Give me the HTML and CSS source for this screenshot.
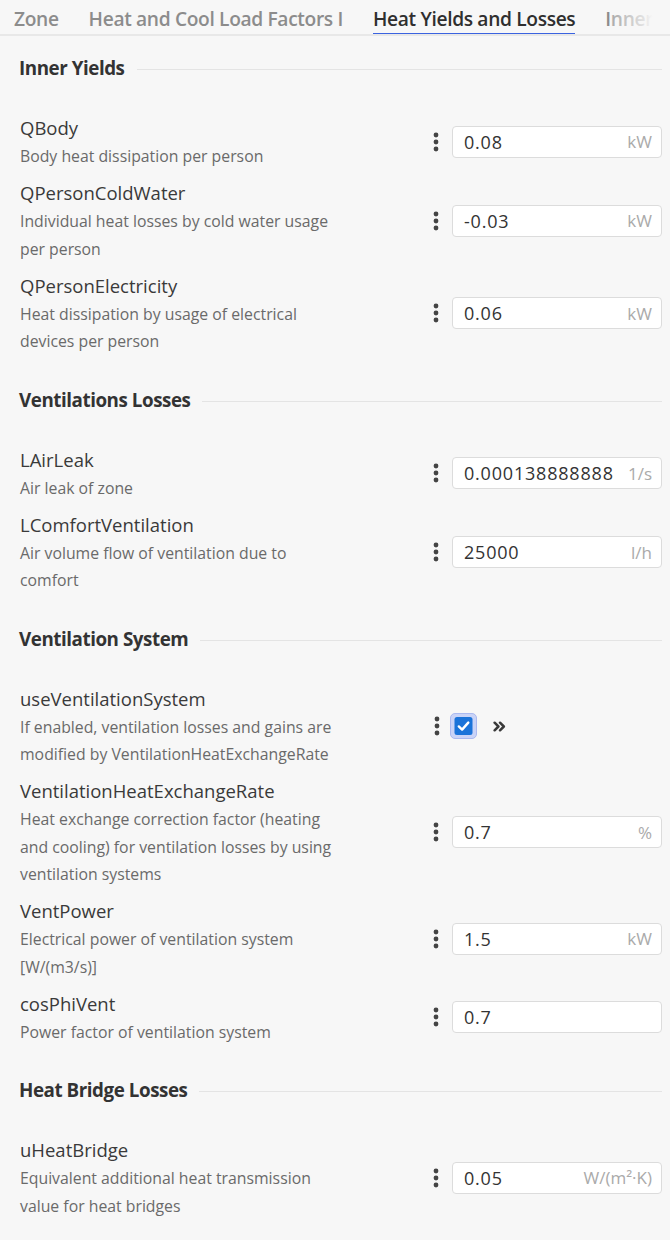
FILE: index.html
```html
<!DOCTYPE html>
<html>
<head>
<meta charset="utf-8">
<link rel="stylesheet" href="styles.css">
</head>
<body>
<div class="tabs">
  <div class="tab">Zone</div>
  <div class="tab">Heat and Cool Load Factors I</div>
  <div class="tab active">Heat Yields and Losses</div>
  <div class="tab">Inner Yields</div>
  <div class="fade"></div>
</div>

<div class="section">
  <div class="sec-head"><span>Inner Yields</span><div class="rule"></div></div>
  <div class="rows">
    <div class="row">
      <div class="info"><div class="label">QBody</div><div class="desc">Body heat dissipation per person</div></div>
      <div class="ctrl"><svg class="dots" viewBox="0 0 6 20"><circle cx="3" cy="3" r="2.4"/><circle cx="3" cy="10" r="2.4"/><circle cx="3" cy="17" r="2.4"/></svg><div class="field"><span class="val">0.08</span><span class="unit">kW</span></div></div>
    </div>
    <div class="row">
      <div class="info"><div class="label">QPersonColdWater</div><div class="desc">Individual heat losses by cold water usage per person</div></div>
      <div class="ctrl"><svg class="dots" viewBox="0 0 6 20"><circle cx="3" cy="3" r="2.4"/><circle cx="3" cy="10" r="2.4"/><circle cx="3" cy="17" r="2.4"/></svg><div class="field"><span class="val">-0.03</span><span class="unit">kW</span></div></div>
    </div>
    <div class="row">
      <div class="info"><div class="label">QPersonElectricity</div><div class="desc">Heat dissipation by usage of electrical devices per person</div></div>
      <div class="ctrl"><svg class="dots" viewBox="0 0 6 20"><circle cx="3" cy="3" r="2.4"/><circle cx="3" cy="10" r="2.4"/><circle cx="3" cy="17" r="2.4"/></svg><div class="field"><span class="val">0.06</span><span class="unit">kW</span></div></div>
    </div>
  </div>
</div>

<div class="section">
  <div class="sec-head"><span>Ventilations Losses</span><div class="rule"></div></div>
  <div class="rows">
    <div class="row">
      <div class="info"><div class="label">LAirLeak</div><div class="desc">Air leak of zone</div></div>
      <div class="ctrl"><svg class="dots" viewBox="0 0 6 20"><circle cx="3" cy="3" r="2.4"/><circle cx="3" cy="10" r="2.4"/><circle cx="3" cy="17" r="2.4"/></svg><div class="field"><span class="val">0.000138888888</span><span class="unit">1/s</span></div></div>
    </div>
    <div class="row">
      <div class="info"><div class="label">LComfortVentilation</div><div class="desc">Air volume flow of ventilation due to comfort</div></div>
      <div class="ctrl"><svg class="dots" viewBox="0 0 6 20"><circle cx="3" cy="3" r="2.4"/><circle cx="3" cy="10" r="2.4"/><circle cx="3" cy="17" r="2.4"/></svg><div class="field"><span class="val">25000</span><span class="unit">l/h</span></div></div>
    </div>
  </div>
</div>

<div class="section">
  <div class="sec-head"><span>Ventilation System</span><div class="rule"></div></div>
  <div class="rows">
    <div class="row">
      <div class="info"><div class="label">useVentilationSystem</div><div class="desc">If enabled, ventilation losses and gains are modified by VentilationHeatExchangeRate</div></div>
      <div class="ctrl"><svg class="dots" viewBox="0 0 6 20"><circle cx="3" cy="3" r="2.4"/><circle cx="3" cy="10" r="2.4"/><circle cx="3" cy="17" r="2.4"/></svg>
        <div class="check"><svg viewBox="0 0 18 18"><rect x="0" y="0" width="18" height="18" rx="2.5" fill="#1a73d9"/><path d="M4.3 9.4 L7.6 12.6 L13.8 5.6" fill="none" stroke="#fff" stroke-width="2.4" stroke-linecap="round" stroke-linejoin="round"/></svg></div>
        <svg class="chev" viewBox="0 0 12 10"><path d="M1.5 1.5 L5 5 L1.5 8.5 M6.5 1.5 L10 5 L6.5 8.5" fill="none" stroke="#3a3a3a" stroke-width="2.3" stroke-linecap="round" stroke-linejoin="round"/></svg>
      </div>
    </div>
    <div class="row">
      <div class="info"><div class="label">VentilationHeatExchangeRate</div><div class="desc">Heat exchange correction factor (heating and cooling) for ventilation losses by using ventilation systems</div></div>
      <div class="ctrl"><svg class="dots" viewBox="0 0 6 20"><circle cx="3" cy="3" r="2.4"/><circle cx="3" cy="10" r="2.4"/><circle cx="3" cy="17" r="2.4"/></svg><div class="field"><span class="val">0.7</span><span class="unit">%</span></div></div>
    </div>
    <div class="row">
      <div class="info"><div class="label">VentPower</div><div class="desc">Electrical power of ventilation system [W/(m3/s)]</div></div>
      <div class="ctrl"><svg class="dots" viewBox="0 0 6 20"><circle cx="3" cy="3" r="2.4"/><circle cx="3" cy="10" r="2.4"/><circle cx="3" cy="17" r="2.4"/></svg><div class="field"><span class="val">1.5</span><span class="unit">kW</span></div></div>
    </div>
    <div class="row">
      <div class="info"><div class="label">cosPhiVent</div><div class="desc">Power factor of ventilation system</div></div>
      <div class="ctrl"><svg class="dots" viewBox="0 0 6 20"><circle cx="3" cy="3" r="2.4"/><circle cx="3" cy="10" r="2.4"/><circle cx="3" cy="17" r="2.4"/></svg><div class="field"><span class="val">0.7</span><span class="unit"></span></div></div>
    </div>
  </div>
</div>

<div class="section">
  <div class="sec-head"><span>Heat Bridge Losses</span><div class="rule"></div></div>
  <div class="rows">
    <div class="row">
      <div class="info"><div class="label">uHeatBridge</div><div class="desc">Equivalent additional heat transmission value for heat bridges</div></div>
      <div class="ctrl"><svg class="dots" viewBox="0 0 6 20"><circle cx="3" cy="3" r="2.4"/><circle cx="3" cy="10" r="2.4"/><circle cx="3" cy="17" r="2.4"/></svg><div class="field"><span class="val">0.05</span><span class="unit">W/(m²·K)</span></div></div>
    </div>
  </div>
</div>
</body>
</html>
```

FILE: styles.css
```css
* { box-sizing: border-box; }
html, body {
  margin: 0;
  padding: 0;
  background: #f7f7f7;
  font-family: "Open Sans", "Noto Sans", sans-serif;
  color: #333;
}
.tabs {
  position: relative;
  display: flex;
  height: 36px;
  padding-left: 14px;
  gap: 30px;
  border-bottom: 2px solid #e8e8e8;
  overflow: hidden;
  white-space: nowrap;
}
.tab {
  font-size: 19.2px;
  font-weight: 600;
  color: #8c8c8c;
  line-height: 37px;
  height: 36px;
  flex: none;
  letter-spacing: -0.35px;
}
.tab.active {
  color: #2f2f2f;
  border-bottom: 3px solid #3b63e0;
}
.fade {
  position: absolute;
  top: 0;
  left: 612px;
  width: 58px;
  height: 34px;
  background: linear-gradient(to right, rgba(247,247,247,0.3), rgba(247,247,247,0.8) 55%, #f7f7f7 70%);
}
.section {
  padding: 0 8px 0 19px;
  margin-top: 20px;
}
.section + .section { margin-top: 32px; }
.sec-head {
  display: flex;
  align-items: center;
  gap: 12px;
  height: 24px;
  font-size: 18.8px;
  font-weight: 700;
  color: #333;
  letter-spacing: -0.45px;
}
.rule {
  flex: 1;
  height: 1px;
  background: #e4e4e4;
  margin-top: 3px;
}
.rows {
  margin-top: 33px;
  display: flex;
  flex-direction: column;
  gap: 7.5px;
}
.row {
  display: flex;
  align-items: center;
}
.info {
  width: 321px;
  padding-left: 1px;
}
.label {
  font-size: 18.5px;
  line-height: 30px;
  color: #3a3a3a;
}
.desc {
  font-size: 15.8px;
  line-height: 27.5px;
  color: #6a6a6a;
}
.ctrl {
  margin-left: auto;
  display: flex;
  align-items: center;
}
.dots {
  width: 6px;
  height: 20px;
  fill: #444;
  margin-right: 13px;
}
.field {
  width: 210px;
  height: 32px;
  background: #fff;
  border: 1px solid #dcdcdc;
  border-radius: 4px;
  display: flex;
  align-items: center;
  padding: 0 9px 0 11px;
  overflow: hidden;
}
.val {
  flex: 1;
  font-size: 18px;
  letter-spacing: 0.8px;
  color: #333;
  white-space: nowrap;
  overflow: hidden;
}
.unit {
  font-size: 17px;
  color: #aaa;
  margin-left: 2px;
  flex: none;
}
.check {
  width: 27px;
  height: 26px;
  border-radius: 5px;
  background: #c9d3f7;
  border: 1px solid #aab9f0;
  display: flex;
  align-items: center;
  justify-content: center;
  margin-left: -3px;
}
.check svg { width: 19px; height: 18px; display: block; }
.chev {
  width: 13px;
  height: 11px;
  margin-left: 16px;
  margin-right: 156px;
}
```
